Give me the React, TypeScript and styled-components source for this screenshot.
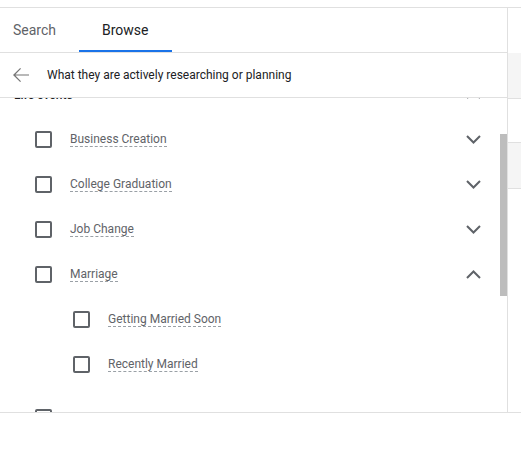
import React, { useLayoutEffect, useRef } from "react";
import styled, { createGlobalStyle } from "styled-components";

const Global = createGlobalStyle`
  html, body { margin: 0; padding: 0; background: #fff; }
  body { font-family: Roboto, "Noto Sans", Arial, sans-serif; }
  * { box-sizing: border-box; }
`;

const Page = styled.div`
  padding-top: 7px;
`;

const Frame = styled.div`
  display: flex;
  height: 406px;
  border-top: 1px solid #e0e0e0;
  border-bottom: 1px solid #e0e0e0;
`;

const LeftPanel = styled.div`
  width: 508px;
  flex: none;
  display: flex;
  flex-direction: column;
  border-right: 1px solid #e0e0e0;
`;

const RightColumn = styled.div`
  flex: 1;
  display: flex;
  flex-direction: column;
`;

const SideSpace = styled.div<{ $h: number }>`
  height: ${(p) => p.$h}px;
  flex: none;
`;

const SideRow = styled.div<{ $top?: boolean }>`
  height: ${(p) => (p.$top ? 47 : 46)}px;
  flex: none;
  background: #f5f5f5;
  border-bottom: 1px solid #e0e0e0;
  border-top: ${(p) => (p.$top ? "1px solid #e0e0e0" : "none")};
`;

const TabBar = styled.div`
  height: 45px;
  flex: none;
  display: flex;
  border-bottom: 1px solid #e0e0e0;
`;

const Tab = styled.div<{ $active?: boolean; $first?: boolean }>`
  position: relative;
  display: flex;
  align-items: center;
  padding: ${(p) => (p.$first ? "0 23px 0 13px" : "0 23px")};
  font-size: 14px;
  color: ${(p) => (p.$active ? "#202124" : "#5f6368")};
  &::after {
    content: "";
    display: ${(p) => (p.$active ? "block" : "none")};
    position: absolute;
    left: 0;
    right: 0;
    bottom: 0;
    height: 2px;
    background: #1a73e8;
  }
`;

const Header = styled.div`
  height: 45px;
  flex: none;
  display: flex;
  align-items: center;
  gap: 14px;
  padding-left: 9px;
  border-bottom: 1px solid #e0e0e0;
  font-size: 12px;
  color: #202124;
`;

const ScrollArea = styled.div`
  flex: 1;
  min-height: 0;
  position: relative;
`;

const Scroller = styled.div`
  height: 100%;
  overflow: hidden;
`;

const Thumb = styled.div`
  position: absolute;
  right: 0;
  top: 36px;
  width: 7px;
  height: 162px;
  background: #bdbdbd;
`;

const List = styled.div`
  padding: 44px 0 17px 0;
`;

const CategoryRow = styled.div`
  height: 45px;
  display: flex;
  align-items: center;
  padding-left: 14px;
  padding-right: 26px;
  font-size: 12px;
  font-weight: 500;
  color: #202124;
`;

const Row = styled.div<{ $indent?: boolean }>`
  height: 45px;
  display: flex;
  align-items: center;
  gap: 18px;
  padding-left: ${(p) => (p.$indent ? 73 : 35)}px;
  padding-right: 26px;
`;

const Box = styled.span`
  width: 17px;
  height: 17px;
  flex: none;
  border: 2px solid #5f6368;
  border-radius: 2px;
`;

const Label = styled.span`
  font-size: 12px;
  color: #5f6368;
  line-height: 14px;
  border-bottom: 1px dashed #9aa0a6;
`;

const Spacer = styled.span`
  flex: 1;
`;

const SubList = styled.div`
  padding-bottom: 8px;
`;

const Chevron = ({ up }: { up?: boolean }) => (
  <svg width="15" height="9" viewBox="0 0 15 9" style={{ flex: "none" }}>
    <polyline
      points={up ? "1,8 7.5,1.5 14,8" : "1,1 7.5,7.5 14,1"}
      fill="none"
      stroke="#5f6368"
      strokeWidth="2"
    />
  </svg>
);

const BackArrow = () => (
  <svg width="24" height="24" viewBox="0 0 24 24" style={{ flex: "none" }}>
    <path
      d="M20 11.4H6.4l5.6-5.6-.85-.8L4 12l7.15 7 .85-.8-5.6-5.6H20z"
      fill="#757575"
    />
  </svg>
);

const Item = ({ label, up, indent }: { label: string; up?: boolean; indent?: boolean }) => (
  <Row $indent={indent}>
    <Box />
    <Label>{label}</Label>
    <Spacer />
    {!indent && <Chevron up={up} />}
  </Row>
);

export default function App() {
  const ref = useRef<HTMLDivElement>(null);
  useLayoutEffect(() => {
    if (ref.current) ref.current.scrollTop = 70;
  }, []);
  return (
    <>
      <Global />
      <Page>
        <Frame>
          <LeftPanel>
            <TabBar>
              <Tab $first>Search</Tab>
              <Tab $active>Browse</Tab>
            </TabBar>
            <Header>
              <BackArrow />
              <span>What they are actively researching or planning</span>
            </Header>
            <ScrollArea>
              <Scroller ref={ref}>
                <List>
                  <CategoryRow>
                    <span>Life events</span>
                    <Spacer />
                    <Chevron up />
                  </CategoryRow>
                  <Item label="Business Creation" />
                  <Item label="College Graduation" />
                  <Item label="Job Change" />
                  <Item label="Marriage" up />
                  <SubList>
                    <Item label="Getting Married Soon" indent />
                    <Item label="Recently Married" indent />
                  </SubList>
                  <Item label="Moving" />
                  <Item label="Purchasing a Home" />
                  <Item label="Retirement" />
                  <Item label="Starting a Family" />
                  <Item label="New Pet" />
                </List>
              </Scroller>
              <Thumb />
            </ScrollArea>
          </LeftPanel>
          <RightColumn>
            <SideSpace $h={45} />
            <SideRow />
            <SideSpace $h={43} />
            <SideRow $top />
          </RightColumn>
        </Frame>
      </Page>
    </>
  );
}
